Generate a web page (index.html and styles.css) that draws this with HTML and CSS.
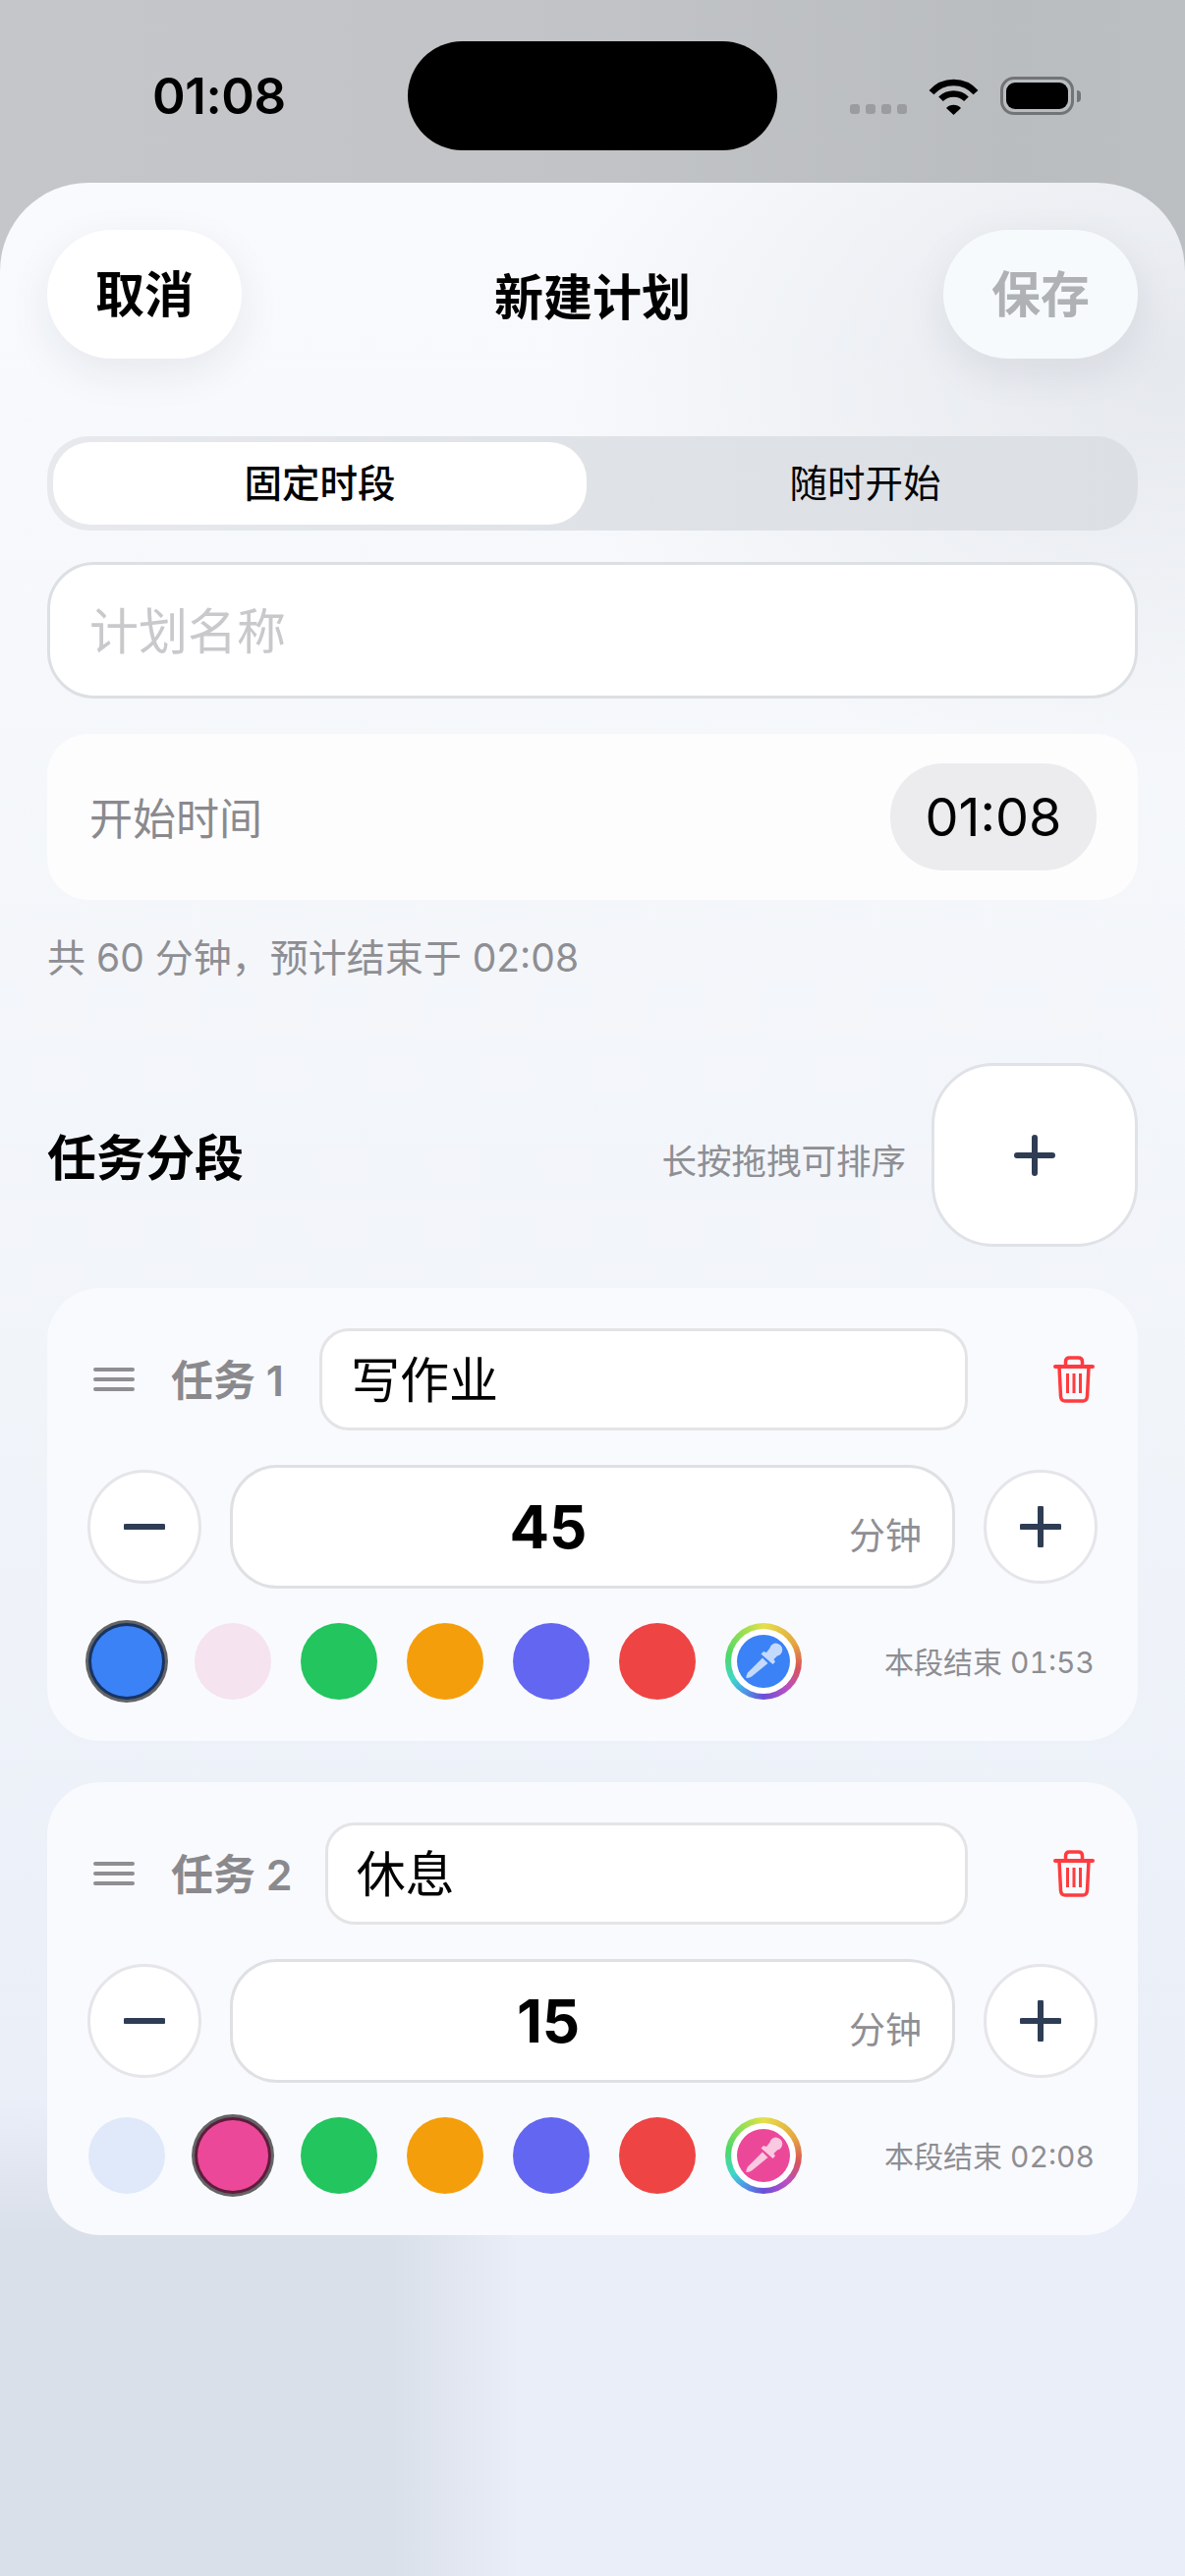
FILE: index.html
```html
<!DOCTYPE html>
<html lang="zh-CN">
<head>
<meta charset="UTF-8">
<meta name="viewport" content="width=device-width, initial-scale=1.0">
<title>新建计划</title>
<link rel="stylesheet" href="styles.css">
</head>
<body>
  <div class="status-bar">
    <div class="status-time">01:08</div>
    <div class="island"></div>
    <div class="status-icons">
      <div class="signal"><span></span><span></span><span></span><span></span></div>
      <svg class="wifi" viewBox="0 0 51 37">
        <path d="M3 14.2A30 30 0 0 1 48 14.2M12.5 20.8A18.5 18.5 0 0 1 38.5 20.8" fill="none" stroke="#000" stroke-width="6.5"/>
        <path d="M18 30A10.5 10.5 0 0 1 33 30L25.5 37Z" fill="#000"/>
      </svg>
      <div class="battery"><div class="battery-level"></div></div>
      <div class="battery-cap"></div>
    </div>
  </div>

  <div class="sheet">
    <div class="nav">
      <div class="nav-btn">取消</div>
      <div class="nav-title">新建计划</div>
      <div class="nav-btn nav-btn-off">保存</div>
    </div>

    <div class="segment">
      <div class="segment-item segment-on">固定时段</div>
      <div class="segment-item">随时开始</div>
    </div>

    <div class="name-field">计划名称</div>

    <div class="start-card">
      <div class="start-label">开始时间</div>
      <div class="start-value">01:08</div>
    </div>

    <div class="summary">共 60 分钟&#65292;预计结束于 02:08</div>

    <div class="section-head">
      <div class="section-title">任务分段</div>
      <div class="section-hint">长按拖拽可排序</div>
      <div class="add-btn">
        <svg class="add-icon" viewBox="0 0 42 42"><path d="M21 3V39M3 21H39" stroke="#2f3d54" stroke-width="6" stroke-linecap="round"/></svg>
      </div>
    </div>

    <div class="task-card">
      <div class="task-row">
        <div class="drag"><span></span><span></span><span></span></div>
        <div class="task-label">任务 1</div>
        <div class="task-name">写作业</div>
        <svg class="trash" viewBox="0 0 42 48" fill="none" stroke="#ff3b3f">
          <path d="M2 11H40" stroke-width="4" stroke-linecap="round"/>
          <path d="M12.5 10V6Q12.5 2 16.5 2H25.5Q29.5 2 29.5 6V10" stroke-width="3.5"/>
          <path d="M6 11L7.5 41Q7.8 46 12 46H30Q34.2 46 34.5 41L36 11" stroke-width="3.5"/>
          <path d="M14.5 18V38M21 18V38M27.5 18V38" stroke-width="3"/>
        </svg>
      </div>
      <div class="task-row task-row-time">
        <div class="round-btn"><svg viewBox="0 0 42 42"><path d="M2 21H40" stroke="#2f3d54" stroke-width="6" stroke-linecap="round"/></svg></div>
        <div class="minutes">45<span class="minutes-unit">分钟</span></div>
        <div class="round-btn"><svg viewBox="0 0 42 42"><path d="M21 2V40M2 21H40" stroke="#2f3d54" stroke-width="6" stroke-linecap="round"/></svg></div>
      </div>
      <div class="task-row task-row-colors">
        <div class="swatch swatch-on blue"></div>
        <div class="swatch pale-pink"></div>
        <div class="swatch green"></div>
        <div class="swatch amber"></div>
        <div class="swatch indigo"></div>
        <div class="swatch red"></div>
        <div class="picker">
          <div class="picker-inner blue">
            <svg viewBox="0 0 54 54" fill="#fff" fill-opacity="0.7">
              <path d="M33.500 13.500A6.500 6.500 0 1 1 41 21.500L37.500 25L39 27.500L36.500 30L24.500 19.500L27 17L30 18Z"/>
              <path d="M26 23.500L31.500 29L15 42.500Q11.500 44.500 9.500 44Q9 42 11 38.500Z"/>
            </svg>
          </div>
        </div>
        <div class="task-end">本段结束 01:53</div>
      </div>
    </div>

    <div class="task-card">
      <div class="task-row">
        <div class="drag"><span></span><span></span><span></span></div>
        <div class="task-label">任务 2</div>
        <div class="task-name">休息</div>
        <svg class="trash" viewBox="0 0 42 48" fill="none" stroke="#ff3b3f">
          <path d="M2 11H40" stroke-width="4" stroke-linecap="round"/>
          <path d="M12.5 10V6Q12.5 2 16.5 2H25.5Q29.5 2 29.5 6V10" stroke-width="3.5"/>
          <path d="M6 11L7.5 41Q7.8 46 12 46H30Q34.2 46 34.5 41L36 11" stroke-width="3.5"/>
          <path d="M14.5 18V38M21 18V38M27.5 18V38" stroke-width="3"/>
        </svg>
      </div>
      <div class="task-row task-row-time">
        <div class="round-btn"><svg viewBox="0 0 42 42"><path d="M2 21H40" stroke="#2f3d54" stroke-width="6" stroke-linecap="round"/></svg></div>
        <div class="minutes">15<span class="minutes-unit">分钟</span></div>
        <div class="round-btn"><svg viewBox="0 0 42 42"><path d="M21 2V40M2 21H40" stroke="#2f3d54" stroke-width="6" stroke-linecap="round"/></svg></div>
      </div>
      <div class="task-row task-row-colors">
        <div class="swatch pale-blue"></div>
        <div class="swatch swatch-on pink"></div>
        <div class="swatch green"></div>
        <div class="swatch amber"></div>
        <div class="swatch indigo"></div>
        <div class="swatch red"></div>
        <div class="picker">
          <div class="picker-inner pink">
            <svg viewBox="0 0 54 54" fill="#fff" fill-opacity="0.7">
              <path d="M33.500 13.500A6.500 6.500 0 1 1 41 21.500L37.500 25L39 27.500L36.500 30L24.500 19.500L27 17L30 18Z"/>
              <path d="M26 23.500L31.500 29L15 42.500Q11.500 44.500 9.500 44Q9 42 11 38.500Z"/>
            </svg>
          </div>
        </div>
        <div class="task-end">本段结束 02:08</div>
      </div>
    </div>
  </div>
</body>
</html>
```

FILE: styles.css
```css
* {
  box-sizing: border-box;
}

body {
  margin: 0;
  width: 1206px;
  height: 2622px;
  overflow: hidden;
  font-family: Inter, "Noto Sans CJK SC", sans-serif;
  color: #000;
  background: linear-gradient(90deg, #c5c6c9 0%, #c1c3c6 50%, #babdc0 85%, #bcbfc2 100%);
}

/* status bar */
.status-bar {
  height: 186px;
  padding: 42px 0 0 155px;
  display: flex;
  align-items: flex-start;
}

.status-time {
  width: 135px;
  height: 111px;
  line-height: 111px;
  font-size: 51px;
  font-weight: 600;
  letter-spacing: -0.4px;
  white-space: nowrap;
}

.island {
  width: 376px;
  height: 111px;
  margin-left: 125px;
  border-radius: 56px;
  background: #000;
}

.status-icons {
  margin: 36px 0 0 74px;
  display: flex;
  align-items: flex-end;
}

.signal {
  display: flex;
  gap: 6px;
  margin-right: 22px;
  margin-bottom: 1px;
}

.signal span {
  width: 10px;
  height: 10px;
  border-radius: 3px;
  background: #9a9c9f;
}

.wifi {
  width: 51px;
  height: 37px;
  margin-right: 22px;
  display: block;
}

.battery {
  width: 75px;
  height: 39px;
  padding: 3px;
  border: 3px solid #727476;
  border-radius: 14px;
}

.battery-level {
  height: 100%;
  border-radius: 9px;
  background: #000;
}

.battery-cap {
  width: 4px;
  height: 12px;
  margin: 0 0 13px 3px;
  border-radius: 0 6px 6px 0;
  background: #727476;
}

/* sheet */
.sheet {
  height: 2436px;
  padding: 48px;
  border-radius: 90px 90px 0 0;
  background:
    linear-gradient(90deg, #dae0ea 400px, rgba(218, 224, 234, 0) 530px) 0 100% / 100% 348px no-repeat,
    linear-gradient(180deg, rgba(218, 224, 234, 0), #dae0ea) 0 1950px / 120px 138px no-repeat,
    radial-gradient(ellipse 620px 420px at 1180px 180px, #e5e8ed 0%, rgba(229, 232, 237, 0) 100%),
    linear-gradient(180deg, #f9fafd 0%, #f6f8fb 18%, #f1f4f9 50%, #e9eef8 85%, #e9eef8 100%);
}

.nav {
  display: flex;
  justify-content: space-between;
  align-items: center;
}

.nav-btn {
  width: 198px;
  height: 131px;
  line-height: 133px;
  border-radius: 66px;
  text-align: center;
  font-size: 50px;
  font-weight: 600;
  background: #fff;
  box-shadow: 0 14px 44px rgba(30, 40, 60, 0.08);
}

.nav-btn-off {
  color: #afb1b4;
  background: #f7fafc;
}

.nav-title {
  font-size: 50px;
  font-weight: 600;
  padding-bottom: 2px;
}

.segment {
  height: 96px;
  margin-top: 79px;
  padding: 6px;
  display: flex;
  border-radius: 42px;
  background: linear-gradient(90deg, #e7e9ed 0%, #dfe2e7 50%, #dcdfe4 100%);
}

.segment-item {
  flex: 1;
  padding-left: 12px;
  line-height: 84px;
  text-align: center;
  font-size: 38.500px;
}

.segment-on {
  flex: none;
  width: 543px;
  padding-left: 0;
  border-radius: 38px;
  font-weight: 500;
  background: #fff;
}

.name-field {
  height: 139px;
  margin-top: 32px;
  padding-left: 40px;
  line-height: 137px;
  font-size: 50px;
  color: #c9c9cc;
  border: 3px solid #dcdfe3;
  border-radius: 48px;
  background: #fff;
}

.start-card {
  height: 169px;
  margin-top: 36px;
  padding: 0 42px 0 43px;
  display: flex;
  justify-content: space-between;
  align-items: center;
  border-radius: 42px;
  background: #fdfdfe;
}

.start-label {
  font-size: 44px;
  color: #8a8a8e;
  padding-bottom: 2px;
}

.start-value {
  width: 210px;
  height: 109px;
  line-height: 109px;
  text-align: center;
  font-size: 54px;
  border-radius: 54px;
  background: #ececee;
}

.summary {
  height: 48px;
  margin-top: 35px;
  line-height: 48px;
  font-size: 39px;
  color: #8e8e93;
}

.section-head {
  margin-top: 83px;
  display: flex;
  align-items: center;
}

.section-title {
  flex: 1;
  padding-bottom: 2px;
  font-size: 50px;
  font-weight: 600;
}

.section-hint {
  margin-right: 26px;
  padding-top: 7px;
  font-size: 35.500px;
  color: #8e8e93;
}

.add-btn {
  width: 210px;
  height: 187px;
  display: flex;
  justify-content: center;
  align-items: center;
  border: 3px solid #dfe2e6;
  border-radius: 63px;
  background: #fff;
}

.add-icon {
  width: 42px;
  height: 42px;
}

/* task cards */
.task-card {
  height: 461px;
  margin-top: 42px;
  padding: 41px 41px 0;
  border-radius: 54px;
  background: #f9fafd;
}

.task-row {
  display: flex;
  align-items: center;
}

.drag {
  width: 42px;
  margin: 0 37px 0 6px;
  display: flex;
  flex-direction: column;
  gap: 6px;
}

.drag span {
  height: 4px;
  border-radius: 2px;
  background: #8e8e93;
}

.task-label {
  min-width: 118px;
  margin-right: 33px;
  padding-bottom: 4px;
  font-size: 43px;
  font-weight: 600;
  color: #8a8a8e;
  white-space: nowrap;
}

.task-name {
  flex: 1;
  height: 104px;
  padding-left: 29px;
  line-height: 100px;
  font-size: 50px;
  border: 3px solid #e4e4e7;
  border-radius: 30px;
  background: #fff;
}

.trash {
  width: 42px;
  height: 48px;
  margin: 0 3px 0 87px;
  flex: none;
}

.task-row-time {
  margin-top: 35px;
  justify-content: space-between;
}

.round-btn {
  width: 116px;
  height: 116px;
  display: flex;
  justify-content: center;
  align-items: center;
  border: 3px solid #e5e5ea;
  border-radius: 50%;
  background: #fff;
}

.round-btn svg {
  width: 42px;
  height: 42px;
}

.minutes {
  position: relative;
  width: 738px;
  height: 126px;
  padding-right: 90px;
  line-height: 120px;
  text-align: center;
  font-size: 60px;
  font-weight: 700;
  border: 3px solid #dfe0e3;
  border-radius: 48px;
  background: #fff;
}

.minutes-unit {
  position: absolute;
  right: 31px;
  top: 46px;
  line-height: 48px;
  font-size: 37px;
  font-weight: 400;
  color: #8e8e93;
}

.task-row-colors {
  margin-top: 35px;
  padding-left: 1px;
  gap: 30px;
}

.swatch {
  width: 78px;
  height: 78px;
  border-radius: 50%;
}

.swatch-on {
  border: 3px solid rgba(0, 0, 0, 0.6);
  box-shadow: 0 0 0 3px rgba(0, 0, 0, 0.6);
}

.blue { background: #3b82f6; }
.pink { background: #ec4899; }
.pale-blue { background: #e0e9f9; }
.pale-pink { background: #f5e3f0; }
.green { background: #22c55e; }
.amber { background: #f59e0b; }
.indigo { background: #6366f1; }
.red { background: #ef4444; }

.picker {
  width: 78px;
  height: 78px;
  padding: 6px;
  border-radius: 50%;
  background: conic-gradient(#e5e04a 0deg, #e6a63f 60deg, #d8555a 100deg, #b94fc4 140deg, #6a4fd8 180deg, #4a9fe8 215deg, #3ed8c8 240deg, #4fd868 280deg, #a0e050 330deg, #e5e04a 360deg);
}

.picker-inner {
  width: 54px;
  height: 54px;
  margin: 6px;
  border-radius: 50%;
  box-shadow: 0 0 0 6px #fff;
}

.picker-inner svg {
  width: 54px;
  height: 54px;
  display: block;
}

.task-end {
  margin-left: auto;
  margin-right: 3px;
  padding-bottom: 2px;
  font-size: 30px;
  font-variant-numeric: tabular-nums;
  color: #8e8e93;
  white-space: nowrap;
}
```
